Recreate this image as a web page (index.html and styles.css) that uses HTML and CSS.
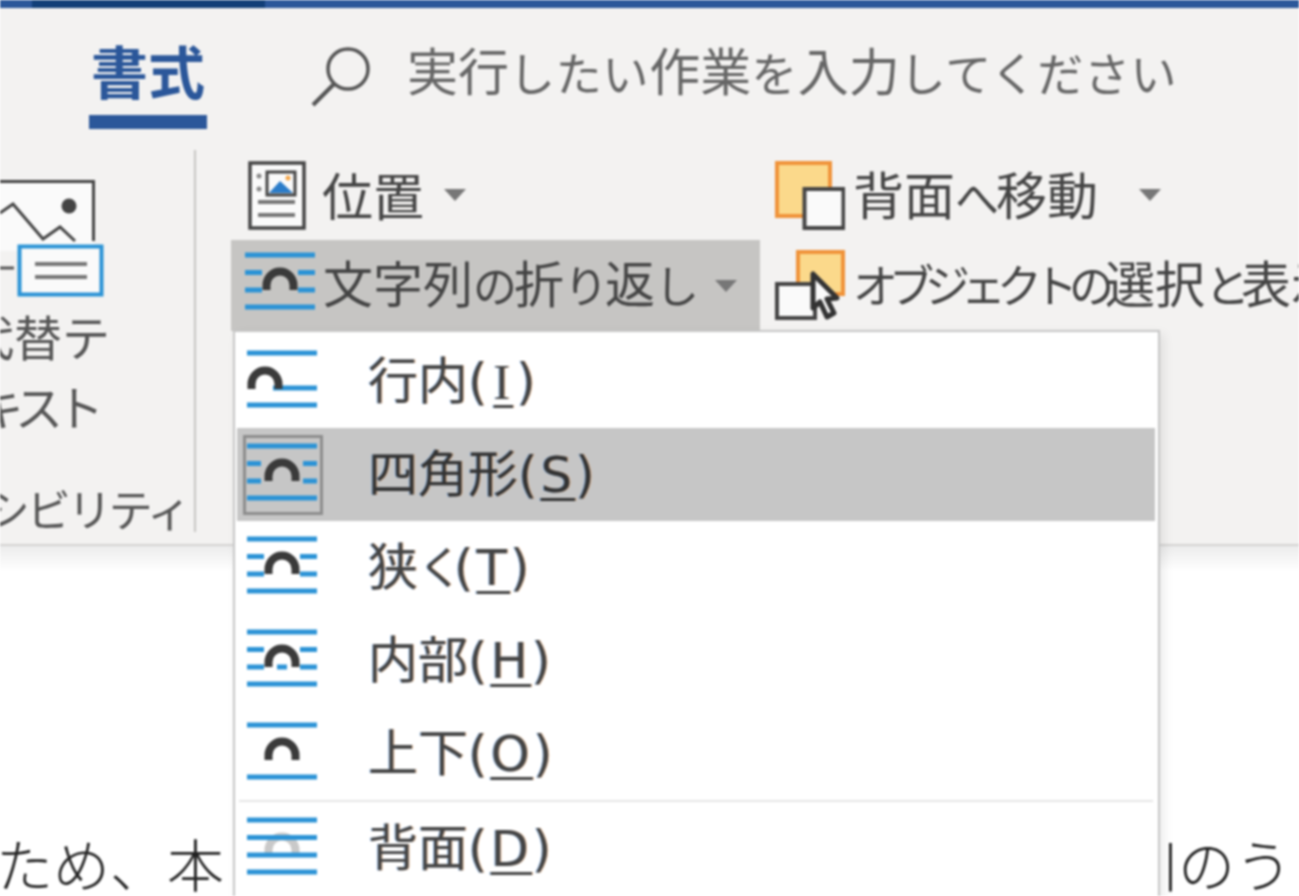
FILE: index.html
```html
<!DOCTYPE html>
<html lang="ja">
<head>
<meta charset="utf-8">
<title>書式</title>
<link rel="stylesheet" href="styles.css">
</head>
<body>
<div class="app">
  <div class="titlebar"><div class="titlebar-seg"></div></div>
  <div class="ribbon">
    <div class="tabs">
      <div class="tab">書式</div>
      <div class="search">
        <svg class="search-icon" width="62" height="62" viewBox="0 0 62 62"><circle cx="38" cy="24" r="20" fill="none" stroke="#555" stroke-width="3.5"/><path d="M24 39 L3 60" stroke="#555" stroke-width="4" fill="none"/></svg>
        <span class="search-text">実行<span class="kana-wide">したい</span>作業<span class="kana-wide">を</span>入力<span class="kana-wide">してください</span></span>
      </div>
    </div>
    <div class="groups">
      <div class="group-alt">
        <svg class="alt-icon" width="110" height="125" viewBox="0 175 110 125">
          <path d="M-10 181 H94 V251 H-10 Z" fill="#fafafa" stroke="none"/>
          <path d="M-10 181.500 H93.500 V241" fill="none" stroke="#444" stroke-width="3"/>
          <circle cx="69" cy="206" r="7.500" fill="#444"/>
          <path d="M0 213 L13 204 L43 239 L60 227 L75 241" fill="none" stroke="#444" stroke-width="3"/>
          <path d="M-4 251 H30 V290 H-4 Z" fill="#f3f2f1"/>
          <path d="M0 268 H14" stroke="#555" stroke-width="3"/>
          <rect x="19.500" y="246.500" width="82" height="48" fill="#fafafa" stroke="#2b93d6" stroke-width="4"/>
          <path d="M35 264 H87 M35 277 H87" stroke="#777" stroke-width="4"/>
        </svg>
        <div class="alt-line alt-line-first">代替<span class="kana-alt">テ</span></div>
        <div class="alt-line alt-line-second"><span class="kana-alt">キスト</span></div>
        <div class="group-label"><span class="kana">アクセシビリティ</span></div>
      </div>
      <div class="group-arrange">
        <div class="col col-main">
          <div class="btn btn-position">
            <svg class="btn-icon" width="70" height="70" viewBox="0 0 70 70">
              <rect x="5" y="3" width="54" height="65" fill="#fafafa" stroke="#444" stroke-width="3.500"/>
              <rect x="22" y="12" width="28" height="23" fill="#fafafa" stroke="#444" stroke-width="3"/>
              <path d="M24 33 L35 21 L48 33 Z" fill="#2b7cc9"/>
              <circle cx="43" cy="18" r="2.500" fill="#f4a64a"/>
              <circle cx="14" cy="16" r="2.500" fill="#888"/><circle cx="14" cy="29" r="2.500" fill="#888"/>
              <path d="M13 42 H50 M13 55 H50" stroke="#777" stroke-width="4"/>
            </svg>
            <span class="btn-text">位置</span><span class="caret caret-pos"></span>
          </div>
          <div class="btn btn-active">
            <svg class="btn-icon btn-icon-wrap" width="70" height="58" viewBox="0 0 70 58">
              <path d="M0 3 H70 M0 20.500 H17 M53 20.500 H70 M0 38 H17 M53 38 H70 M0 55 H70" stroke="#2b93d6" stroke-width="5"/>
              <path d="M21.500 38 V33 A13.500 13.500 0 0 1 48.500 33 V38" fill="none" stroke="#3a3a3a" stroke-width="8"/>
            </svg>
            <span class="btn-text">文字列<span class="kana">の</span>折<span class="kana">り</span>返<span class="kana">し</span></span><span class="caret caret-wrap"></span>
          </div>
        </div>
        <div class="col col-side">
          <div class="btn btn-back">
            <svg class="btn-icon" width="70" height="70" viewBox="0 0 70 70">
              <rect x="2" y="3" width="53" height="53" fill="#fbd98b" stroke="#f0933a" stroke-width="4"/>
              <rect x="29.500" y="29" width="39" height="39" fill="#fafafa" stroke="#444" stroke-width="4"/>
            </svg>
            <span class="btn-text">背面<span class="kana">へ</span>移動</span><span class="caret caret-back"></span>
          </div>
          <div class="btn btn-select">
            <svg class="btn-icon" width="70" height="70" viewBox="0 0 70 70">
              <rect x="23" y="2" width="45" height="42" fill="#fbd98b" stroke="#f0933a" stroke-width="4"/>
              <path d="M2 34 H40 V68 H2 Z" fill="#fafafa" stroke="#444" stroke-width="4"/>
              <path d="M38 24 V58 L45 52 L52 67 L59 63 L52 49 L62 48 Z" fill="#fafafa" stroke="#333" stroke-width="5" stroke-linejoin="round"/>
            </svg>
            <span class="btn-text"><span class="kana-tight">オブジェクトの</span>選択<span class="kana-tight">と</span>表示</span>
          </div>
        </div>
      </div>
    </div>
  </div>
  <div class="document">
    <div class="doc-line">
      <span class="doc-left">ため、本</span>
      <span class="doc-right">川のう</span>
    </div>
  </div>

  <div class="menu">
    <div class="menu-item">
      <span class="icon-box"><svg width="70" height="58" viewBox="0 0 70 58">
        <path d="M0 3 H70 M26 38 H70 M0 55 H70" stroke="#2b93d6" stroke-width="5"/>
        <path d="M4.500 39 V34 A13.500 13.500 0 0 1 31.500 34 V39" fill="none" stroke="#3a3a3a" stroke-width="8"/>
      </svg></span>
      <span class="menu-text">行内<span class="latin">(<u class="latin-serif">I</u>)</span></span>
    </div>
    <div class="menu-item menu-item-on">
      <span class="icon-box icon-box-on"><svg width="70" height="58" viewBox="0 0 70 58">
        <path d="M0 3 H70 M0 20.500 H14 M56 20.500 H70 M0 38 H14 M56 38 H70 M0 55 H70" stroke="#2b93d6" stroke-width="5"/>
        <path d="M21.500 38 V33 A13.500 13.500 0 0 1 48.500 33 V38" fill="none" stroke="#3a3a3a" stroke-width="8"/>
      </svg></span>
      <span class="menu-text">四角形<span class="latin">(<u>S</u>)</span></span>
    </div>
    <div class="menu-item">
      <span class="icon-box"><svg width="70" height="58" viewBox="0 0 70 58">
        <path d="M0 3 H70 M0 20.500 H17 M53 20.500 H70 M0 38 H17 M53 38 H70 M0 55 H70" stroke="#2b93d6" stroke-width="5"/>
        <path d="M21.500 38 V33 A13.500 13.500 0 0 1 48.500 33 V38" fill="none" stroke="#3a3a3a" stroke-width="8"/>
      </svg></span>
      <span class="menu-text">狭<span class="kana-tight">く</span><span class="latin">(<u>T</u>)</span></span>
    </div>
    <div class="menu-item">
      <span class="icon-box"><svg width="70" height="58" viewBox="0 0 70 58">
        <path d="M0 3 H70 M0 20.500 H17 M53 20.500 H70 M0 38 H17 M53 38 H70 M0 55 H70" stroke="#2b93d6" stroke-width="5"/>
        <path d="M21.500 38 V33 A13.500 13.500 0 0 1 48.500 33 V38" fill="none" stroke="#3a3a3a" stroke-width="8"/>
        <path d="M30 38 H40" stroke="#2b93d6" stroke-width="5"/>
      </svg></span>
      <span class="menu-text">内部<span class="latin">(<u>H</u>)</span></span>
    </div>
    <div class="menu-item">
      <span class="icon-box"><svg width="70" height="58" viewBox="0 0 70 58">
        <path d="M0 3 H70 M0 55 H70" stroke="#2b93d6" stroke-width="5"/>
        <path d="M21.500 38 V33 A13.500 13.500 0 0 1 48.500 33 V38" fill="none" stroke="#3a3a3a" stroke-width="8"/>
      </svg></span>
      <span class="menu-text">上下<span class="latin">(<u>O</u>)</span></span>
    </div>
    <div class="menu-sep"></div>
    <div class="menu-item">
      <span class="icon-box"><svg width="70" height="58" viewBox="0 0 70 58">
        <path d="M21.500 38 V33 A13.500 13.500 0 0 1 48.500 33 V38" fill="none" stroke="#c9c9c9" stroke-width="8"/>
        <path d="M0 3 H70 M0 20.500 H70 M0 38 H70 M0 55 H70" stroke="#2b93d6" stroke-width="5"/>
      </svg></span>
      <span class="menu-text">背面<span class="latin">(<u>D</u>)</span></span>
    </div>
  </div>
</div>
</body>
</html>
```
FILE: styles.css
```css
* { box-sizing: border-box; }
html, body { margin: 0; height: 100%; background: #fff; overflow: hidden; }
body { font-family: "Noto Sans CJK JP", "Noto Sans", sans-serif; }

.app {
  position: relative;
  width: 1299px;
  height: 896px;
  display: flex;
  flex-direction: column;
  overflow: hidden;
  filter: blur(0.8px);
}

.titlebar { height: 8px; background: #2b579a; flex: none; }
.titlebar-seg { width: 233px; height: 100%; margin-left: 32px; background: #123f78; }

.ribbon {
  flex: none;
  height: 538px;
  background: #f3f2f1;
  border-bottom: 2px solid #d4d3d2;
  overflow: hidden;
}

.kana { font-size: 44px; letter-spacing: -3px; }
.kana-wide { font-size: 46px; letter-spacing: 0.7px; }
.kana-alt { font-size: 48px; letter-spacing: -7px; }
.kana-tight { font-size: 45px; letter-spacing: -9px; }

.tabs { display: flex; height: 121px; padding-left: 89px; }
.tab {
  width: 118px;
  height: 121px;
  padding-top: 17px;
  border-bottom: 14px solid #2b579a;
  color: #2b579a;
  font-size: 57px;
  font-weight: 700;
  line-height: 88px;
  text-align: center;
  white-space: nowrap;
}
.search { display: flex; align-items: flex-start; margin-left: 103px; padding-top: 37px; }
.search-icon { flex: none; }
.search-text {
  margin-left: 35px;
  margin-top: -9px;
  color: #666;
  font-size: 51px;
  line-height: 66px;
  white-space: nowrap;
}

.groups { display: flex; height: 382px; margin-top: 21px; }

.group-alt {
  flex: none;
  width: 196px;
  height: 382px;
  border-right: 2px solid #c6c5c3;
  overflow: hidden;
  color: #555;
}
.alt-icon { display: block; margin-top: 25px; }
.alt-line {
  display: flex;
  justify-content: flex-end;
  font-size: 48px;
  line-height: 70px;
  white-space: nowrap;
}
.alt-line-first { width: 103px; }
.alt-line-second { width: 97px; }
.group-label {
  display: flex;
  justify-content: flex-end;
  width: 188px;
  margin-top: 38px;
  line-height: 60px;
  white-space: nowrap;
}

.group-arrange { display: flex; padding-left: 35px; }
.col { display: flex; flex-direction: column; }
.col-main { width: 529px; }
.col-side { margin-left: 15px; }

.btn {
  display: flex;
  align-items: center;
  height: 90px;
  color: #444;
  white-space: nowrap;
}
.btn-active { background: #c6c5c3; height: 91px; }
.btn-icon { flex: none; }
.btn-icon-wrap { margin-left: 14px; margin-top: -10px; }
.btn-position .btn-icon { margin-left: 14px; }
.btn-text { margin: -6px 0 0 8px; font-size: 50px; line-height: 70px; }
.btn-position .btn-text { margin: -2px 0 0 7px; font-size: 51px; }
.btn-back .btn-text { margin: -2px 0 0 8px; font-size: 51px; }

.caret {
  flex: none;
  width: 0;
  height: 0;
  border-left: 11px solid transparent;
  border-right: 11px solid transparent;
  border-top: 12px solid #777;
}
.caret-pos { margin-left: 20px; }
.caret-wrap { margin-left: 19px; }
.caret-back { margin-left: 41px; }

.document {
  flex: 1;
  position: relative;
  overflow: hidden;
  background: linear-gradient(#ececec, #fff 25px);
}
.doc-line {
  display: flex;
  justify-content: space-between;
  margin-top: 278px;
  padding-right: 7px;
  margin-left: -4px;
  color: #222;
  font-size: 57px;
  font-weight: 300;
  line-height: 76px;
  white-space: nowrap;
}

.menu {
  position: absolute;
  left: 233px;
  top: 330px;
  width: 927px;
  height: 600px;
  padding: 3px 3px 0 2px;
  background: #fff;
  border: 2px solid #c6c6c6;
  box-shadow: 4px 4px 10px rgba(0, 0, 0, 0.08);
}
.menu-item {
  display: flex;
  align-items: center;
  height: 93px;
  color: #444;
}
.menu-item-on { background: #c6c6c6; color: #333; }
.icon-box {
  flex: none;
  display: flex;
  align-items: center;
  justify-content: center;
  width: 80px;
  height: 80px;
  margin-left: 6px;
  border: 3px solid transparent;
}
.icon-box svg { margin: -6px 0 0 -2px; flex: none; }
.icon-box-on { border-color: #8d8d8d; }
.menu-text {
  margin: -4px 0 0 45px;
  font-size: 50px;
  line-height: 70px;
  text-shadow: -1px 0 rgba(60, 140, 230, 0.45), 1px 0 rgba(230, 140, 60, 0.45);
  white-space: nowrap;
}
.latin { font-family: "DejaVu Sans", sans-serif; font-size: 50px; letter-spacing: 3px; }
.latin-serif { font-family: "Liberation Serif", serif; padding: 0 3px; }
.menu-text u { text-underline-offset: 6px; text-decoration-thickness: 3px; }
.menu-sep { height: 2px; margin: 0 2px; background: #e6e6e6; }
```
